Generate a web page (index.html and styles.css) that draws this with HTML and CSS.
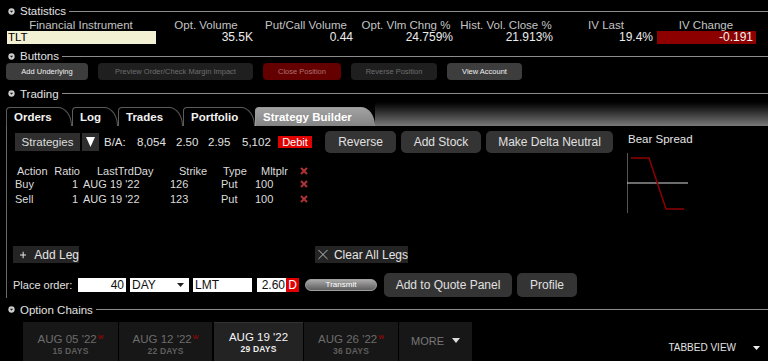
FILE: index.html
```html
<!DOCTYPE html>
<html lang="en">
<head>
    <meta charset="UTF-8">
    <title>Option Trader</title>
    <link rel="stylesheet" href="styles.css">
</head>
<body>
    <!-- Statistics -->
    <div class="sec-head stats-head">
        <svg class="bullet" viewBox="0 0 8 8"><circle cx="4" cy="4" r="3.6" fill="#cfcfcf"/><path d="M2.1 3 L5.9 3 L4 5.5 Z" fill="#1a1a1a"/></svg>
        <span class="title">Statistics</span>
        <span class="rule"></span>
    </div>
    <div class="stats">
        <div class="th">Financial Instrument</div>
        <div class="th">Opt. Volume</div>
        <div class="th">Put/Call Volume</div>
        <div class="th">Opt. Vlm Chng %</div>
        <div class="th">Hist. Vol. Close %</div>
        <div class="th">IV Last</div>
        <div class="th">IV Change</div>
        <div class="td symbol">TLT</div>
        <div class="td">35.5K</div>
        <div class="td">0.44</div>
        <div class="td">24.759%</div>
        <div class="td">21.913%</div>
        <div class="td">19.4%</div>
        <div class="td neg">-0.191</div>
    </div>

    <!-- Buttons -->
    <div class="sec-head buttons-head">
        <svg class="bullet" viewBox="0 0 8 8"><circle cx="4" cy="4" r="3.6" fill="#cfcfcf"/><path d="M2.1 3 L5.9 3 L4 5.5 Z" fill="#1a1a1a"/></svg>
        <span class="title">Buttons</span>
        <span class="rule"></span>
    </div>
    <div class="btn-row">
        <button class="sbtn on w-under">Add Underlying</button>
        <button class="sbtn off w-preview">Preview Order/Check Margin Impact</button>
        <button class="sbtn danger w-close">Close Position</button>
        <button class="sbtn off w-reverse">Reverse Position</button>
        <button class="sbtn on w-view">View Account</button>
    </div>

    <!-- Trading -->
    <div class="sec-head trading-head">
        <svg class="bullet" viewBox="0 0 8 8"><circle cx="4" cy="4" r="3.6" fill="#cfcfcf"/><path d="M2.1 3 L5.9 3 L4 5.5 Z" fill="#1a1a1a"/></svg>
        <span class="title">Trading</span>
        <span class="rule"></span>
    </div>
    <div class="tabstrip">
        <div class="tab t-orders">Orders</div>
        <div class="tab t-log">Log</div>
        <div class="tab t-trades">Trades</div>
        <div class="tab t-portfolio">Portfolio</div>
        <div class="tab t-builder active">Strategy Builder</div>
        <div class="tab-fill"></div>
    </div>

    <div class="panel">
        <div class="panel-main">
            <div class="strat-row">
                <div class="strat-btn">Strategies</div>
                <div class="strat-dd">
                    <svg width="9" height="10" viewBox="0 0 9 10"><path d="M0 0 L9 0 L4.5 10 Z" fill="#fff"/></svg>
                </div>
                <span class="ba ba-label">B/A:</span>
                <span class="ba ba-1">8,054</span>
                <span class="ba ba-2">2.50</span>
                <span class="ba ba-3">2.95</span>
                <span class="ba ba-4">5,102</span>
                <span class="debit">Debit</span>
                <button class="mbtn w-rev">Reverse</button>
                <button class="mbtn w-stock">Add Stock</button>
                <button class="mbtn w-delta">Make Delta Neutral</button>
            </div>

            <div class="legs">
                <div class="lh c1">Action</div>
                <div class="lh c2">Ratio</div>
                <div class="lh c3">LastTrdDay</div>
                <div class="lh c4">Strike</div>
                <div class="lh c5">Type</div>
                <div class="lh c6">Mltplr</div>
                <div class="lh c7"><svg class="xmark" viewBox="0 0 8 8"><path d="M1 1L7 7M7 1L1 7"/></svg></div>

                <div class="ld c1">Buy</div>
                <div class="ld c2">1</div>
                <div class="ld c3">AUG 19 '22</div>
                <div class="ld c4">126</div>
                <div class="ld c5">Put</div>
                <div class="ld c6">100</div>
                <div class="ld c7"><svg class="xmark" viewBox="0 0 8 8"><path d="M1 1L7 7M7 1L1 7"/></svg></div>

                <div class="ld c1">Sell</div>
                <div class="ld c2">1</div>
                <div class="ld c3">AUG 19 '22</div>
                <div class="ld c4">123</div>
                <div class="ld c5">Put</div>
                <div class="ld c6">100</div>
                <div class="ld c7"><svg class="xmark" viewBox="0 0 8 8"><path d="M1 1L7 7M7 1L1 7"/></svg></div>
            </div>

            <div class="leg-actions">
                <div class="leg-btn add-leg">
                    <svg width="10" height="10" viewBox="0 0 10 10"><path d="M5 0V10M0 5H10" stroke="#e8e8e8" stroke-width="1.6"/></svg>
                    <span>Add Leg</span>
                </div>
                <div class="leg-btn clear-legs">
                    <svg width="11" height="11" viewBox="0 0 11 11"><path d="M0.5 0.5L10.5 10.5M10.5 0.5L0.5 10.5" stroke="#bbb" stroke-width="1.1"/></svg>
                    <span>Clear All Legs</span>
                </div>
            </div>

            <div class="order-row">
                <span class="order-label">Place order:</span>
                <div class="field f-qty">40</div>
                <div class="field f-tif">DAY
                    <svg width="7" height="4" viewBox="0 0 7 4"><path d="M0 0H7L3.5 4Z" fill="#222"/></svg>
                </div>
                <div class="field f-type">LMT</div>
                <div class="field f-price">2.60</div>
                <div class="flag-d">D</div>
                <div class="transmit">Transmit</div>
                <button class="mbtn w-quote">Add to Quote Panel</button>
                <button class="mbtn w-profile">Profile</button>
            </div>
        </div>

        <div class="panel-side">
            <div class="side-title">Bear Spread</div>
            <svg class="payoff" width="80" height="70" viewBox="0 0 80 70">
                <line x1="7.5" y1="3" x2="7.5" y2="63" stroke="#555" stroke-width="1"/>
                <line x1="7" y1="33" x2="68" y2="33" stroke="#d8d8d8" stroke-width="1"/>
                <polyline points="11,8 29,8 46,59 64,59" fill="none" stroke="#8e0000" stroke-width="1.5"/>
            </svg>
        </div>
    </div>

    <!-- Option Chains -->
    <div class="sec-head chains-head">
        <svg class="bullet" viewBox="0 0 8 8"><circle cx="4" cy="4" r="3.6" fill="#cfcfcf"/><path d="M2.1 3 L5.9 3 L4 5.5 Z" fill="#1a1a1a"/></svg>
        <span class="title">Option Chains</span>
        <span class="rule"></span>
    </div>
    <div class="chain-row">
        <div class="chain w-05">
            <div class="exp">AUG 05 '22<sup>W</sup></div>
            <div class="days">15 DAYS</div>
        </div>
        <div class="chain w-12">
            <div class="exp">AUG 12 '22<sup>W</sup></div>
            <div class="days">22 DAYS</div>
        </div>
        <div class="chain w-19 current">
            <div class="exp">AUG 19 '22</div>
            <div class="days">29 DAYS</div>
        </div>
        <div class="chain w-26">
            <div class="exp">AUG 26 '22<sup>W</sup></div>
            <div class="days">36 DAYS</div>
        </div>
        <div class="chain more">
            <span>MORE</span>
            <svg width="8" height="5" viewBox="0 0 8 5"><path d="M0 0H8L4 5Z" fill="#ddd"/></svg>
        </div>
        <div class="view-switch">
            <span>TABBED VIEW</span>
            <svg width="7" height="4" viewBox="0 0 7 4"><path d="M0 0H7L3.5 4Z" fill="#eee"/></svg>
        </div>
    </div>
</body>
</html>
```

FILE: styles.css
```css
* {
    margin: 0;
    padding: 0;
    box-sizing: border-box;
}

body {
    background: #000;
    color: #d9d9d9;
    font-family: 'Liberation Sans', Arial, sans-serif;
    font-size: 11.5px;
    width: 768px;
    height: 361px;
    overflow: hidden;
}

button {
    font-family: inherit;
    border: none;
    cursor: pointer;
}

/* Section headers */
.sec-head {
    display: flex;
    align-items: center;
    padding-left: 8px;
}

.sec-head .bullet {
    width: 7px;
    height: 7px;
    flex: none;
}

.sec-head .title {
    margin-left: 5px;
    color: #e2e2e2;
    white-space: nowrap;
}

.sec-head .rule {
    flex: 1;
    height: 1px;
    background: #8c8c8c;
    margin-left: 3px;
}

.stats-head {
    margin-top: 3px;
    height: 16px;
}

.buttons-head {
    margin-top: 5px;
    height: 14px;
}

.trading-head {
    margin-top: 6px;
    height: 15px;
}

.chains-head {
    margin-top: 4px;
    height: 15px;
}

/* Statistics grid */
.stats {
    display: grid;
    grid-template-columns: 150px repeat(6, 100px);
    grid-template-rows: 12px 13px;
    margin-left: 6px;
}

.stats .th {
    text-align: center;
    line-height: 12px;
    color: #c4c4c4;
    font-size: 11.5px;
    white-space: nowrap;
}

.stats .td {
    text-align: right;
    padding-right: 3px;
    line-height: 13px;
    font-size: 12px;
    color: #ececec;
}

.stats .td.symbol {
    margin-left: 1px;
    background: #f3f1d3;
    color: #000;
    text-align: left;
    padding-left: 1px;
    font-size: 11.5px;
}

.stats .td.neg {
    margin-left: 1px;
    background: #8c0000;
    color: #f2f2f2;
}

/* Button row */
.btn-row {
    display: flex;
    gap: 10px;
    padding-left: 6px;
    height: 17px;
}

.sbtn {
    height: 17px;
    border-radius: 4px;
    font-size: 7.5px;
    white-space: nowrap;
}

.sbtn.on {
    background: #3d3d3d;
    color: #f0f0f0;
}

.sbtn.off {
    background: #1f1f1f;
    color: #6e6e6e;
}

.sbtn.danger {
    background: #640000;
    color: #b07070;
}

.w-under { width: 82px; }
.w-preview { width: 155px; }
.w-close { width: 78px; }
.w-reverse { width: 86px; }
.w-view { width: 75px; }

/* Tabs */
.tabstrip {
    display: flex;
    align-items: flex-end;
    height: 25px;
    padding-left: 6px;
}

.tab {
    height: 19px;
    line-height: 18px;
    padding-left: 7px;
    border: 1px solid #5c5c5c;
    border-bottom: none;
    border-radius: 4px 14px 0 0 / 4px 19px 0 0;
    background: #000;
    color: #f2f2f2;
    font-weight: bold;
    font-size: 11.5px;
    white-space: nowrap;
    flex: none;
}

.tab.active {
    background: linear-gradient(#a2a2a2, #848484);
    border-color: #9a9a9a;
    color: #fff;
}

.t-orders { width: 66px; }
.t-log { width: 46px; }
.t-trades { width: 65px; }
.t-portfolio { width: 72px; }
.t-builder { width: 120px; }

.tab-fill {
    flex: 1;
    height: 25px;
    background: linear-gradient(#000 5%, #2a2a2a 40%, #7a7a7a);
}

/* Trading panel */
.panel {
    display: flex;
    margin-left: 6px;
    height: 172px;
    border-left: 1px solid #6a6a6a;
    padding-left: 6px;
}

.panel-main {
    width: 600px;
    display: flex;
    flex-direction: column;
}

.panel-side {
    margin-left: 15px;
    width: 100px;
}

.side-title {
    margin-top: 7px;
    line-height: 13px;
    color: #e6e6e6;
}

.payoff {
    display: block;
    margin-top: 4px;
    margin-left: -8px;
}

.strat-row {
    display: flex;
    align-items: center;
    margin-top: 5px;
    height: 22px;
}

.strat-btn {
    margin-left: 2px;
    width: 65px;
    height: 18px;
    line-height: 18px;
    text-align: center;
    background: #2e2e2e;
    color: #dedede;
}

.strat-dd {
    margin-left: 2px;
    width: 17px;
    height: 18px;
    background: #2e2e2e;
    display: flex;
    align-items: center;
    justify-content: center;
}

.ba {
    color: #e2e2e2;
    white-space: nowrap;
}

.ba-label { margin-left: 5px; width: 33px; }
.ba-1 { width: 39px; }
.ba-2 { width: 32px; }
.ba-3 { width: 34px; }
.ba-4 { width: 36px; }

.debit {
    width: 34px;
    height: 12px;
    line-height: 12px;
    background: #e00000;
    color: #fff;
    text-align: center;
    font-size: 11px;
}

.mbtn {
    height: 22px;
    border-radius: 5px;
    background: #343434;
    color: #e0e0e0;
    font-size: 12px;
    margin-left: 5px;
    white-space: nowrap;
}

.w-rev { width: 71px; margin-left: 13px; }
.w-stock { width: 80px; }
.w-delta { width: 127px; }
.w-quote { width: 128px; height: 24px; margin-left: 7px; }
.w-profile { width: 60px; height: 24px; }

/* Legs table */
.legs {
    display: grid;
    grid-template-columns: 38px 27px 88px 49px 35px 44px 14px;
    grid-template-rows: 12px 14px 16px;
    align-items: center;
    margin-top: 12px;
    margin-left: 2px;
    font-size: 11px;
    color: #dcdcdc;
    white-space: nowrap;
}

.legs .c2 { text-align: right; }
.lh.c1 { padding-left: 2px; }
.ld.c2 { padding-right: 2px; }
.lh.c3 { padding-left: 17px; }
.ld.c3 { padding-left: 3px; }
.lh.c4 { padding-left: 11px; }
.ld.c4 { padding-left: 2px; }
.lh.c5 { padding-left: 6px; }
.ld.c5 { padding-left: 4px; }
.lh.c6 { padding-left: 9px; }
.ld.c6 { padding-left: 3px; }
.legs .c7 { padding-left: 4px; display: flex; }

.xmark {
    width: 8px;
    height: 8px;
    stroke: #b03333;
    stroke-width: 2;
}

.leg-actions {
    display: flex;
    margin-top: 39px;
    height: 17px;
}

.leg-btn {
    display: flex;
    align-items: center;
    background: #242424;
    color: #e4e4e4;
    font-size: 12px;
    height: 17px;
    white-space: nowrap;
}

.add-leg {
    width: 66px;
    padding-left: 7px;
    gap: 8px;
}

.clear-legs {
    width: 93px;
    margin-left: 236px;
    padding-left: 3px;
    gap: 6px;
}

/* Order entry */
.order-row {
    display: flex;
    align-items: center;
    margin-top: 10px;
    height: 24px;
}

.order-label {
    width: 65px;
    font-size: 11px;
    color: #e0e0e0;
    white-space: nowrap;
}

.field {
    height: 14px;
    line-height: 14px;
    background: #fff;
    color: #111;
    font-size: 12px;
    padding: 0 2px;
}

.f-qty { width: 48px; text-align: right; }
.f-tif {
    width: 59px;
    margin-left: 4px;
    display: flex;
    align-items: center;
    justify-content: space-between;
    padding-right: 5px;
}
.f-type { width: 59px; margin-left: 4px; }
.f-price { width: 29px; margin-left: 5px; text-align: right; padding-right: 1px; }

.flag-d {
    width: 13px;
    height: 14px;
    line-height: 14px;
    background: #e00000;
    color: #fff;
    font-size: 12px;
    text-align: center;
}

.transmit {
    margin-left: 6px;
    width: 72px;
    height: 12px;
    line-height: 10px;
    border: 1px solid #a0a0a0;
    border-radius: 7px;
    background: linear-gradient(#a8a8a8, #5e5e5e);
    color: #fff;
    font-size: 8px;
    text-align: center;
}

/* Option chain tabs */
.chain-row {
    display: flex;
    gap: 1px;
    margin-top: 5px;
    height: 39px;
    padding-left: 23px;
}

.chain {
    display: flex;
    flex-direction: column;
    align-items: center;
    padding-top: 9px;
    background: #171717;
    color: #6c6c6c;
}

.chain .exp {
    line-height: 12px;
    font-size: 11.5px;
    white-space: nowrap;
}

.chain .exp sup {
    color: #b80000;
    font-size: 6px;
    vertical-align: 4px;
    margin-left: 1px;
}

.chain .days {
    line-height: 10px;
    margin-top: 1px;
    font-size: 8.5px;
    font-weight: bold;
    letter-spacing: 0.2px;
    color: #5e5e5e;
}

.chain.current {
    background: #232323;
    color: #f4f4f4;
    border-top: 1px solid #333;
    padding-top: 8px;
    margin-left: 1px;
}

.chain.current .days {
    color: #ececec;
}

.w-05 { width: 95px; }
.w-12 { width: 93px; }
.w-19 { width: 89px; }
.w-26 { width: 94px; }

.chain.more {
    width: 73px;
    flex-direction: row;
    justify-content: center;
    align-items: center;
    gap: 8px;
    padding-top: 0;
    padding-bottom: 2px;
    font-size: 11px;
    color: #777;
}

.view-switch {
    margin-left: auto;
    padding-top: 21px;
    padding-right: 8px;
    display: flex;
    align-items: flex-start;
    gap: 17px;
    font-size: 10px;
    line-height: 10px;
    color: #e2e2e2;
}

.view-switch svg {
    margin-top: 3px;
}
```
